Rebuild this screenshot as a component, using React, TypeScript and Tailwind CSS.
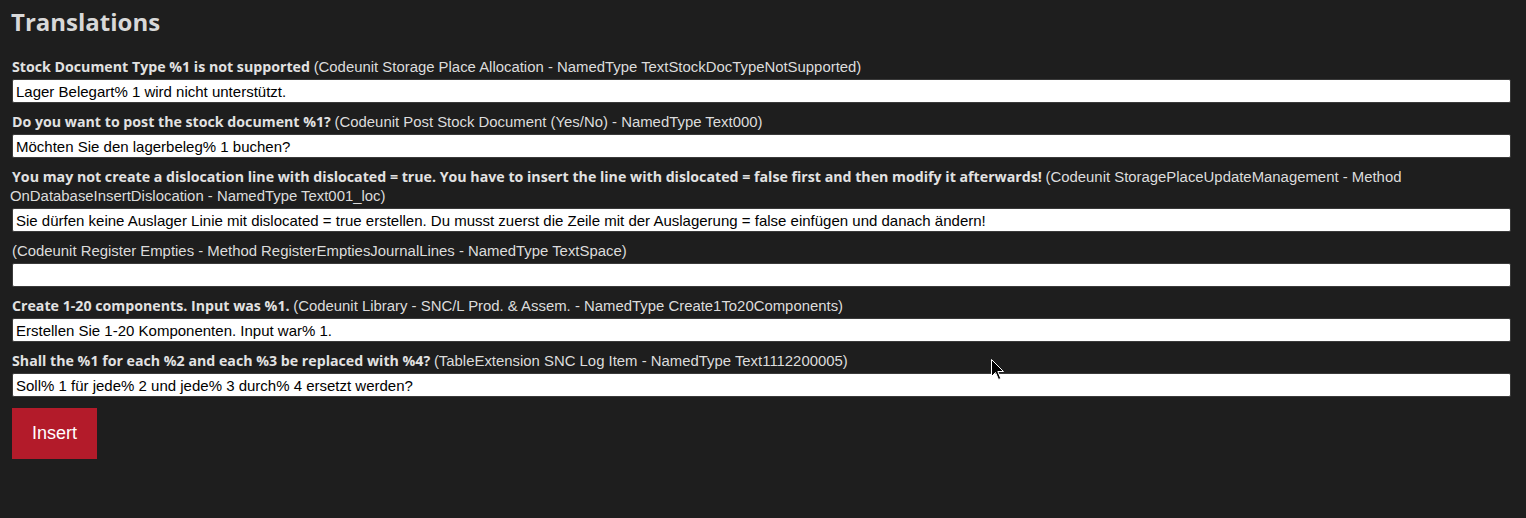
import React from 'react';

type Row = { title?: string; source: string; value: string };

const rows: Row[] = [
  {
    title: 'Stock Document Type %1 is not supported',
    source: '(Codeunit Storage Place Allocation - NamedType TextStockDocTypeNotSupported)',
    value: 'Lager Belegart% 1 wird nicht unterstützt.',
  },
  {
    title: 'Do you want to post the stock document %1?',
    source: '(Codeunit Post Stock Document (Yes/No) - NamedType Text000)',
    value: 'Möchten Sie den lagerbeleg% 1 buchen?',
  },
  {
    title:
      'You may not create a dislocation line with dislocated = true. You have to insert the line with dislocated = false first and then modify it afterwards!',
    source:
      '(Codeunit StoragePlaceUpdateManagement - Method OnDatabaseInsertDislocation - NamedType Text001_loc)',
    value:
      'Sie dürfen keine Auslager Linie mit dislocated = true erstellen. Du musst zuerst die Zeile mit der Auslagerung = false einfügen und danach ändern!',
  },
  {
    source: '(Codeunit Register Empties - Method RegisterEmptiesJournalLines - NamedType TextSpace)',
    value: '',
  },
  {
    title: 'Create 1-20 components. Input was %1.',
    source: '(Codeunit Library - SNC/L Prod. & Assem. - NamedType Create1To20Components)',
    value: 'Erstellen Sie 1-20 Komponenten. Input war% 1.',
  },
  {
    title: 'Shall the %1 for each %2 and each %3 be replaced with %4?',
    source: '(TableExtension SNC Log Item - NamedType Text1112200005)',
    value: 'Soll% 1 für jede% 2 und jede% 3 durch% 4 ersetzt werden?',
  },
];

const App: React.FC = () => {
  return (
    <div className="relative min-h-screen bg-[#1e1e1e] px-[10px] pt-[6px] pr-[15px] font-['Liberation_Sans',Arial,sans-serif] text-[#dcdcdc]">
      <h1 className="mb-[20px] pl-[1px] font-['Open_Sans',sans-serif] text-[24px] font-bold leading-[32px] text-[#d8d8d8]">
        Translations
      </h1>

      <div className="flex flex-col gap-[10px]">
        {rows.map((r, i) => (
          <div key={i} className="flex flex-col gap-[2px]">
            <label className="indent-[2px] text-[14.9px] leading-[19px]">
              {r.title && (
                <span className="font-['Open_Sans',sans-serif] text-[14.2px] font-bold leading-[14px] text-[#e2e2e2]">
                  {r.title}{' '}
                </span>
              )}
              <span className="leading-[14px]">{r.source}</span>
            </label>
            <input
              readOnly
              value={r.value}
              className="ml-[2px] h-[24px] rounded-[2px] border border-[#3a3a3a] bg-white px-[3px] text-[15px] text-black outline-none"
            />
          </div>
        ))}
      </div>

      <button className="ml-[2px] mt-[11px] h-[51px] w-[85px] bg-[#b31b2a] text-[18px] text-white">
        Insert
      </button>

      <svg
        className="absolute left-[991px] top-[359px]"
        width="14"
        height="22"
        viewBox="0 0 14 22"
      >
        <path
          d="M0.5 0.5 V17.5 L4.5 13.5 L7.5 20.5 L9.8 19.5 L6.8 12.5 H12.5 Z"
          fill="#000"
          stroke="#fff"
          strokeWidth="1"
        />
      </svg>
    </div>
  );
};

export default App;
